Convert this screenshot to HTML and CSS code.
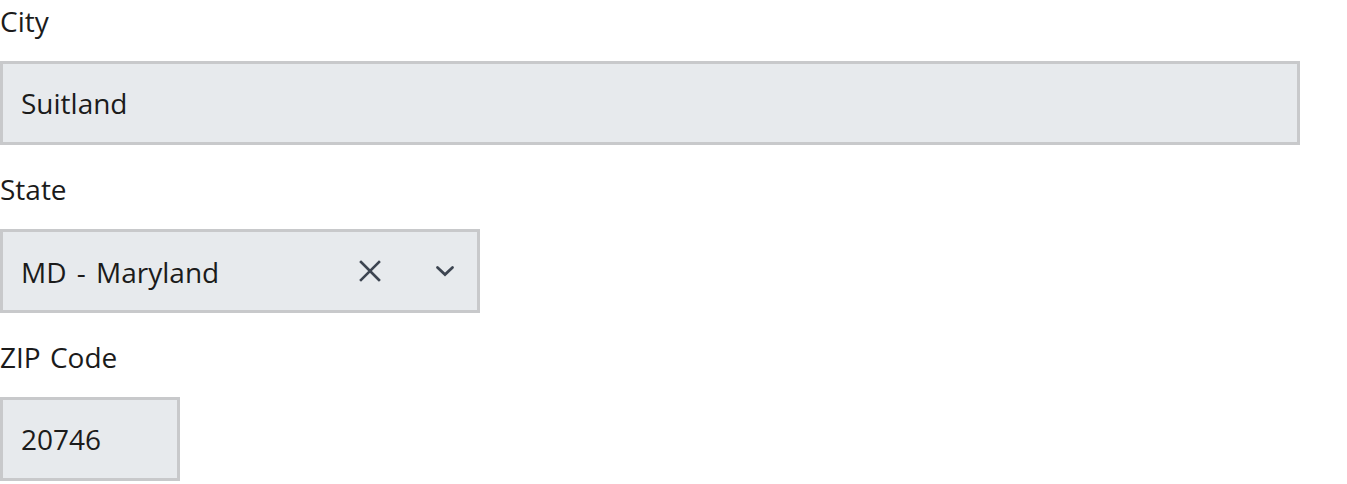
FILE: index.html
```html
<!DOCTYPE html>
<html lang="en">
<head>
<meta charset="utf-8">
<title>Address</title>
<link rel="stylesheet" href="styles.css">
</head>
<body>
<form class="form">
  <div class="group">
    <label class="label" for="city">City</label>
    <input class="field field-full" id="city" type="text" value="Suitland" disabled>
  </div>
  <div class="group">
    <label class="label" for="state">State</label>
    <div class="combo" id="state">
      <span class="combo-value">MD - Maryland</span>
      <span class="combo-clear" aria-label="Clear">
        <svg width="24" height="24" viewBox="0 0 24 24"><path d="M3 3 L21 21 M21 3 L3 21" stroke="#3d4551" stroke-width="2.6" fill="none" stroke-linecap="square"/></svg>
      </span>
      <span class="combo-toggle" aria-label="Toggle">
        <svg width="24" height="24" viewBox="0 0 24 24"><path d="M4.5 8.5 L12 15.5 L19.5 8.5" stroke="#3d4551" stroke-width="2.8" fill="none" stroke-linecap="round" stroke-linejoin="miter"/></svg>
      </span>
    </div>
  </div>
  <div class="group">
    <label class="label" for="zip">ZIP Code</label>
    <input class="field field-zip" id="zip" type="text" value="20746" disabled>
  </div>
</form>
</body>
</html>
```
FILE: styles.css
```css
html, body {
  margin: 0;
  padding: 0;
  background: #ffffff;
}
body {
  font-family: "Open Sans", "Noto Sans", sans-serif;
  color: #1b1b1b;
}
.form {
  display: flex;
  flex-direction: column;
  gap: 23px;
}
.group {
  display: flex;
  flex-direction: column;
  align-items: flex-start;
}
.label {
  display: block;
  font-size: 28px;
  line-height: 42px;
  margin-bottom: 19px;
  word-spacing: 2px;
}
.field,
.combo {
  box-sizing: border-box;
  height: 84px;
  border: 3px solid #c8c9cb;
  background: #e7eaed;
  font-family: "Open Sans", "Noto Sans", sans-serif;
  font-size: 28px;
  word-spacing: 3px;
  color: #1b1b1b;
  padding: 0 0 0 18px;
  margin: 0;
  border-radius: 0;
  outline: none;
}
.field {
  -webkit-text-fill-color: #1b1b1b;
  opacity: 1;
}
.field-full { width: 1300px; }
.field-zip { width: 180px; }
.combo {
  width: 480px;
  display: flex;
  align-items: center;
  padding-right: 20px;
}
.combo-value {
  flex: 1;
  padding-top: 2px;
}
.combo-clear,
.combo-toggle {
  display: flex;
  width: 24px;
  height: 24px;
}
.combo-clear { margin-right: 51px; }
```
